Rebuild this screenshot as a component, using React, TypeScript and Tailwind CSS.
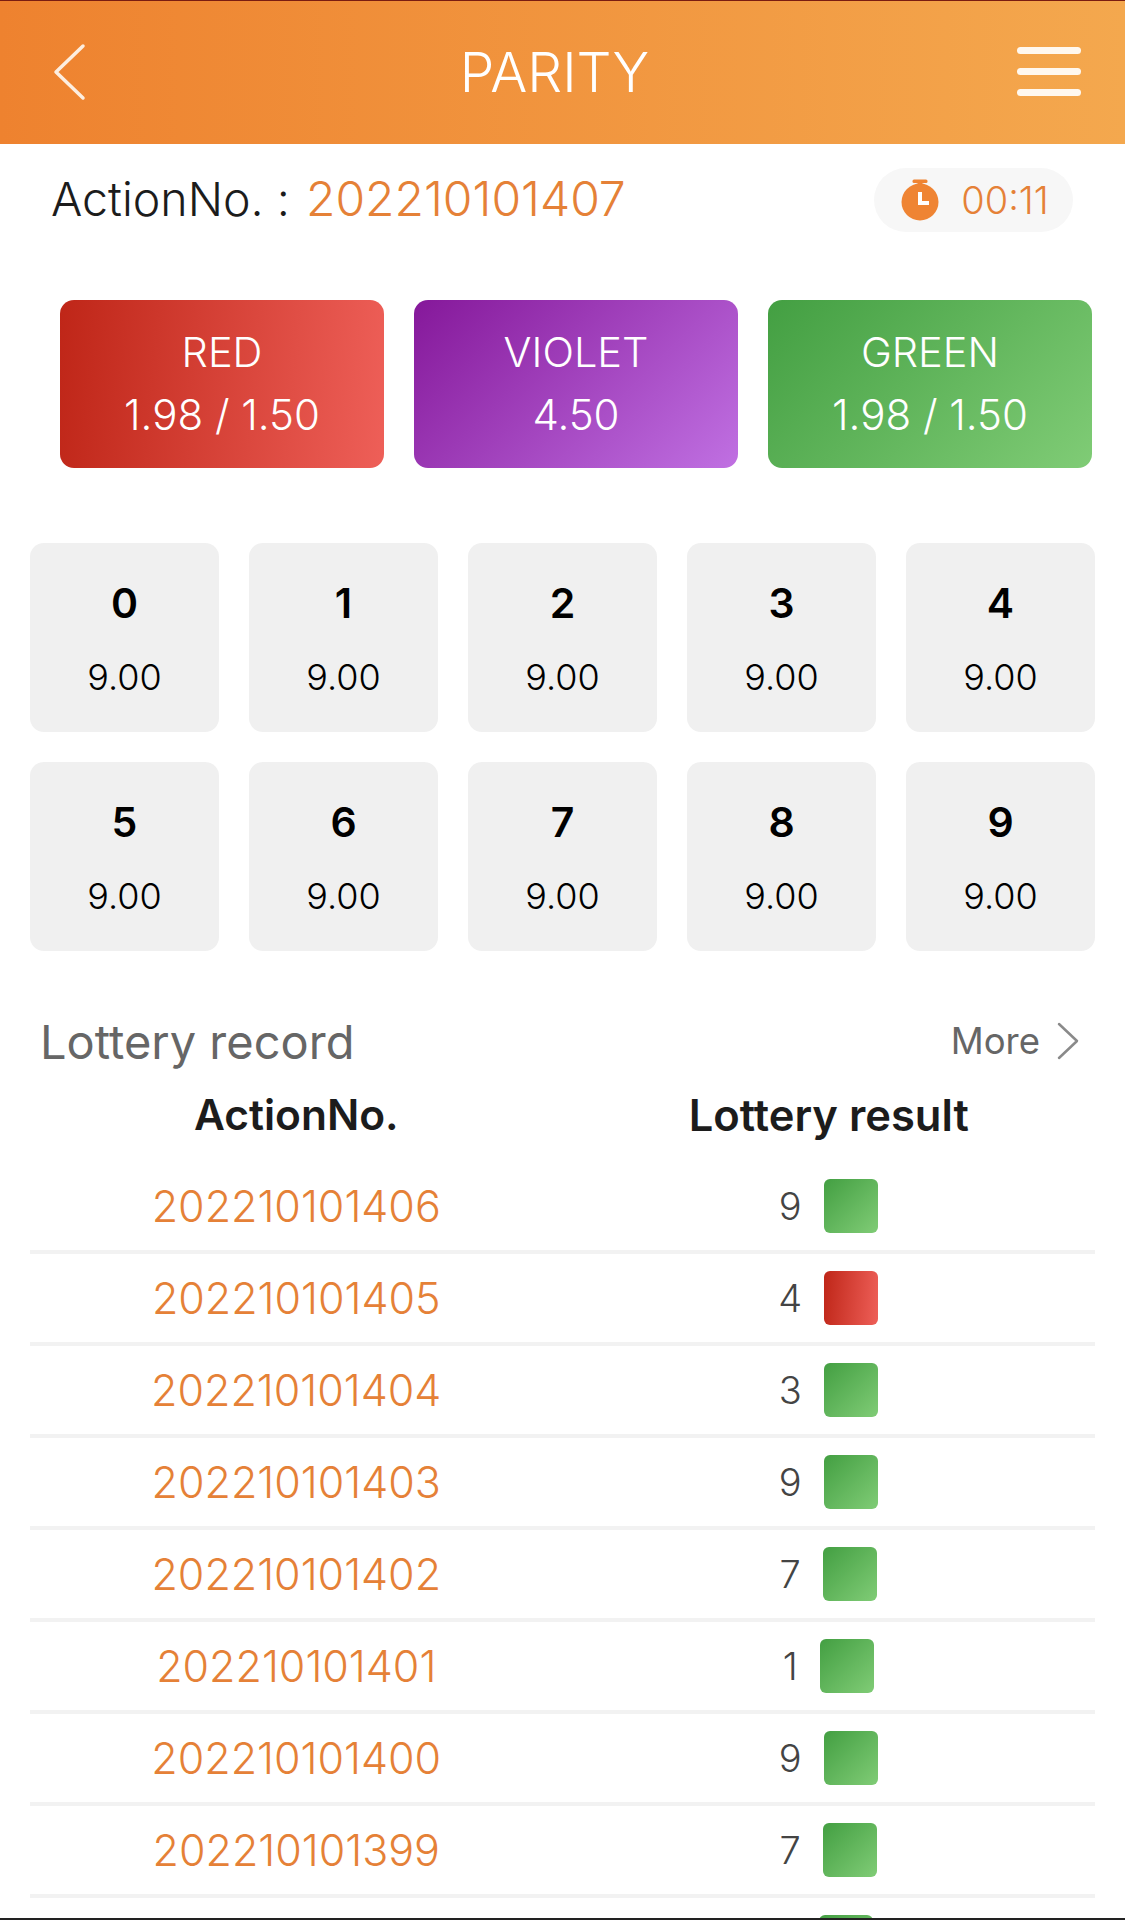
import React from "react";

const font = { fontFamily: "Inter, 'Noto Sans', sans-serif" };

const cards = [
  { name: "RED", odds: "1.98 / 1.50", bg: "bg-[linear-gradient(95deg,#bf2618,#ee5f58)]" },
  { name: "VIOLET", odds: "4.50", bg: "bg-[linear-gradient(135deg,#85189a,#c070e2)]" },
  { name: "GREEN", odds: "1.98 / 1.50", bg: "bg-[linear-gradient(135deg,#439f42,#80cc76)]" },
];

const records = [
  { no: "202210101406", num: "9", color: "green" },
  { no: "202210101405", num: "4", color: "red" },
  { no: "202210101404", num: "3", color: "green" },
  { no: "202210101403", num: "9", color: "green" },
  { no: "202210101402", num: "7", color: "green" },
  { no: "202210101401", num: "1", color: "green" },
  { no: "202210101400", num: "9", color: "green" },
  { no: "202210101399", num: "7", color: "green" },
  // cut off by the bottom of the screen, only the top of the square shows
  { no: "", num: "", color: "green" },
];

const Stopwatch = () => (
  <svg viewBox="0 0 38 52" className="w-[38px] h-[52px]">
    <rect x="11.5" y="5.5" width="15" height="3.5" rx="1.5" fill="#ef8433" />
    <rect x="16.5" y="8" width="5" height="4" fill="#ef8433" />
    <circle cx="19" cy="28" r="18.5" fill="#ef8433" />
    <path d="M19 18v11h9" fill="none" stroke="#fff" strokeWidth="4" />
  </svg>
);

export default function App() {
  return (
    <div style={font} className="w-[1125px] h-[1920px] overflow-hidden bg-white relative">
      {/* header */}
      <header className="h-[144px] border-t border-[#7a1c10] bg-[linear-gradient(90deg,#ee822f,#f4a84e)] flex items-center justify-between pl-[52px] pr-[44px]">
        <svg viewBox="0 0 34 58" className="w-[34px] h-[58px] -mt-[2px]">
          <path d="M31 3 4 29l27 26" fill="none" stroke="#fdeee0" strokeWidth="3.5" strokeLinecap="round" strokeLinejoin="round" />
        </svg>
        <h1 className="text-[55px] text-white font-light leading-none ml-[6px]">PARITY</h1>
        <div className="flex flex-col gap-[14px] w-[64px] -mt-[3px]">
          <div className="h-[7px] rounded-full bg-[#fff8ef]" />
          <div className="h-[7px] rounded-full bg-[#fff8ef]" />
          <div className="h-[7px] rounded-full bg-[#fff8ef]" />
        </div>
      </header>

      {/* current round */}
      <div className="h-[87px] pt-[24px] pl-[51px] pr-[52px] flex items-start justify-between">
        <div className="h-[64px] -mt-[1px] flex items-center font-light leading-none">
          <span className="text-[46.5px] text-[#1c1c1c]">ActionNo. :</span>
          <span className="text-[48px] font-[350] text-[#e58137] ml-[16px]">202210101407</span>
        </div>
        <div className="w-[199px] h-[64px] pl-[3px] rounded-[32px] bg-[#f7f7f7] flex items-center justify-center gap-[22px]">
          <Stopwatch />
          <span className="text-[38px] font-light text-[#e58137] leading-none">00:11</span>
        </div>
      </div>

      {/* colour bets */}
      <div className="mt-[69px] pr-[33px] pl-[60px] grid grid-cols-3 gap-[30px]">
        {cards.map((c) => (
          <div key={c.name} className={`${c.bg} h-[168px] rounded-[14px] flex flex-col items-center justify-center gap-[21px] text-white font-light leading-none`}>
            <span className="text-[41.5px]">{c.name}</span>
            <span className="text-[42px]">{c.odds}</span>
          </div>
        ))}
      </div>

      {/* number bets */}
      <div className="mt-[75px] px-[30px] grid grid-cols-5 gap-[30px]">
        {[0, 1, 2, 3, 4, 5, 6, 7, 8, 9].map((n) => (
          <div key={n} className="h-[189px] pt-[3px] rounded-[14px] bg-[#f0f0f0] flex flex-col items-center justify-center gap-[35px] text-black leading-none">
            <span className="text-[41px] font-semibold">{n}</span>
            <span className="text-[36px] font-light">9.00</span>
          </div>
        ))}
      </div>

      {/* record */}
      <div className="mt-[62px] pl-[40px] pr-[46px] flex items-center justify-between h-[56px]">
        <span className="text-[47px] text-[#666666] leading-none">Lottery record</span>
        <div className="flex items-center gap-[17px]">
          <span className="text-[36.5px] text-[#666666] leading-none">More</span>
          <svg viewBox="0 0 22 38" className="w-[22px] h-[38px]">
            <path d="M2 2l18 17L2 36" fill="none" stroke="#8a8a8a" strokeWidth="2.5" strokeLinecap="round" strokeLinejoin="round" />
          </svg>
        </div>
      </div>

      <div className="px-[30px]">
        <div className="grid grid-cols-2 h-[93px] items-center font-semibold text-[#1c1c1c] leading-none text-center">
          <span className="text-[42.5px]">ActionNo.</span>
          <span className="text-[43.5px]">Lottery result</span>
        </div>
        {records.map((r, i) => (
          <div key={i} className="grid grid-cols-2 items-center h-[92px] border-b-4 border-[#f2f2f2]">
            <span className="text-center text-[43px] font-[350] text-[#e58137] leading-none">{r.no}</span>
            <div className="flex items-center justify-center gap-[22px] pr-[1px]">
              {r.num ? (
                <span className="text-[38px] font-light text-[#444444] leading-none">{r.num}</span>
              ) : (
                <div className="w-[14px]" />
              )}
              <div className={`w-[54px] h-[54px] rounded-[6px] ${r.color === "red" ? "bg-[linear-gradient(95deg,#bf2618,#ee5f58)]" : "bg-[linear-gradient(135deg,#439f42,#80cc76)]"}`} />
            </div>
          </div>
        ))}
      </div>
      <div className="absolute bottom-0 left-0 right-0 h-[2px] bg-[#222222]" />
    </div>
  );
}
